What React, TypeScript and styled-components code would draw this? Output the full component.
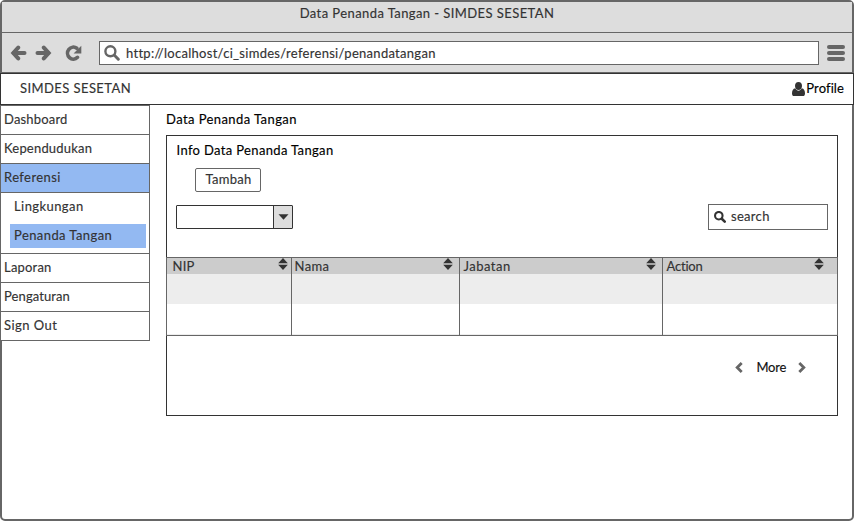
import React from 'react';
import styled, { createGlobalStyle } from 'styled-components';

const ink = '#333333';
const steel = '#666666';
const chrome = '#dddddd';
const accent = '#93b9f2';

const GlobalStyle = createGlobalStyle`
  *, *::before, *::after { box-sizing: border-box; }
  body { margin: 0; background: #fff; }
  button, input { font: inherit; }
  svg { display: block; flex: none; }
`;

const Label = styled.span<{ $track?: number; $dark?: boolean }>`
  letter-spacing: ${(p) => p.$track ?? 0.35}px;
  color: ${(p) => (p.$dark ? '#000' : 'inherit')};
  white-space: nowrap;
  font-variant-ligatures: none;
`;

const BrowserFrame = styled.div`
  width: 854px;
  height: 521px;
  display: flex;
  flex-direction: column;
  border: 2px solid ${steel};
  border-radius: 5px;
  background: #fff;
  color: ${ink};
  font: 13px/16px Lato, sans-serif;
  -webkit-text-stroke: 0.15px;
`;

const TitleBar = styled.div`
  height: 31px;
  padding-top: 3px;
  text-align: center;
  background: ${chrome};
  border-bottom: 1px solid ${steel};
`;

const Toolbar = styled.div`
  height: 40px;
  display: flex;
  align-items: flex-start;
  padding: 8px 7px 0 8px;
  background: ${chrome};
  border-bottom: 1px solid ${steel};
  color: ${steel};
`;

const NavIcons = styled.div`
  display: flex;
  gap: 8px;
  width: 89px;
  padding-top: 4px;
`;

const ReloadSlot = styled.div`
  margin-left: 5px;
`;

const AddressBar = styled.div`
  width: 720px;
  height: 24px;
  display: flex;
  padding: 3px 0 0 4px;
  gap: 6px;
  background: #fff;
  border: 1px solid ${steel};
  color: ${steel};

  ${Label} { color: ${ink}; }
`;

const MenuLines = styled.div`
  display: flex;
  flex-direction: column;
  gap: 2px;
  width: 18px;
  margin: 4px 0 0 8px;
`;

const MenuLine = styled.span`
  height: 4px;
  border-radius: 2px;
  background: ${steel};
`;

const AppHeader = styled.header`
  height: 32px;
  margin: 0 -2px;
  display: flex;
  justify-content: space-between;
  padding: 6px 9px 0 19px;
  background: #fff;
  border: 1px solid ${ink};
`;

const Profile = styled.div`
  display: flex;
  gap: 1px;

  svg { margin-top: 2px; }
`;

const Body = styled.div`
  flex: 1;
  display: flex;
  align-items: flex-start;
  margin-left: -2px;
`;

const Sidebar = styled.nav`
  width: 150px;
  background: #fff;
  border: 1px solid ${steel};
  border-bottom: 0;
`;

const NavItem = styled.div<{ $active?: boolean }>`
  height: 29px;
  padding: 5px 0 0 3px;
  background: ${(p) => (p.$active ? accent : '#fff')};
  border-bottom: 1px solid ${steel};
`;

const SubMenu = styled.div`
  height: 61px;
  padding: 2px 3px 0 9px;
  display: flex;
  flex-direction: column;
  gap: 5px;
  border-bottom: 1px solid ${steel};
`;

const SubItem = styled.div<{ $active?: boolean }>`
  height: 24px;
  padding: 3px 0 0 4px;
  background: ${(p) => (p.$active ? accent : 'transparent')};
`;

const Main = styled.main`
  width: 672px;
  margin-left: 16px;
  padding-top: 6px;
`;

const PageTitle = styled.div`
  height: 24px;
`;

const Panel = styled.section`
  height: 281px;
  border: 1px solid ${ink};
`;

const PanelTitle = styled.div`
  padding: 6px 0 0 9.5px;
  height: 32px;
`;

const AddButton = styled.button`
  display: block;
  width: 66px;
  height: 24px;
  margin-left: 28px;
  padding: 0 0 2px 1px;
  line-height: 16px;
  background: #fff;
  color: ${ink};
  border: 1px solid ${steel};
  border-radius: 2px;
  -webkit-text-stroke: 0.15px;
`;

const Controls = styled.div`
  display: flex;
  justify-content: space-between;
  height: 65px;
  padding: 12px 9px 0;
`;

const Combo = styled.div`
  display: flex;
  justify-content: flex-end;
  width: 117px;
  height: 24px;
  margin-top: 1px;
  border: 1px solid ${ink};
  border-radius: 1px;
`;

const ComboArrow = styled.div`
  width: 19px;
  display: flex;
  align-items: center;
  justify-content: center;
  background: ${chrome};
  border-left: 1px solid ${ink};
`;

const SearchBox = styled.div`
  display: flex;
  gap: 5px;
  width: 120px;
  height: 26px;
  padding: 3px 0 0 5px;
  border: 1px solid ${steel};

  svg { margin-top: 3px; }
`;

const Table = styled.div`
  display: grid;
  grid-template-columns: 125px 168px 203px 174px;
  margin: 0 -1px;
  border: 1px solid ${steel};
  height: 79px;
`;

const Column = styled.div`
  border-right: 1px solid ${steel};
  &:last-child { border-right: 0; }
`;

const HeadCell = styled.div<{ $left?: number; $right?: number }>`
  height: 16px;
  display: flex;
  justify-content: space-between;
  padding-left: ${(p) => p.$left ?? 3}px;
  padding-right: ${(p) => p.$right ?? 6}px;
  background: #cccccc;
`;

const Stripe = styled.div<{ $shaded?: boolean; $thin?: boolean }>`
  height: ${(p) => (p.$thin ? 1 : 30)}px;
  background: ${(p) => (p.$shaded ? '#ededed' : '#fff')};
`;

const Pager = styled.div`
  display: flex;
  justify-content: flex-end;
  align-items: flex-start;
  padding: 23px 31px 0 0;
  color: ${steel};

  ${Label} { color: #111; margin: 0 12px 0 13px; }
  svg { margin-top: 3px; }
`;

const ArrowIcon = ({ flip }: { flip?: boolean }) => (
  <svg width="17" height="16" viewBox="0 0 17 16" fill="none" stroke="currentColor" strokeWidth="4">
    <g transform={flip ? 'translate(17 0) scale(-1 1)' : undefined}>
      <path d="M8.200 2.600 3.300 8l4.900 5.400" strokeLinecap="round" strokeLinejoin="miter" />
      <path d="M4 8h10.500" strokeLinecap="round" />
    </g>
  </svg>
);

const ReloadIcon = () => (
  <svg width="17" height="16" viewBox="0 0 17 16">
    <path d="M11.800 3.300A5.800 6 0 1 0 12.500 12.300" fill="none" stroke="currentColor" strokeWidth="3.600" strokeLinecap="round" />
    <path d="M16.300.8v7.700H8.600z" fill="currentColor" />
  </svg>
);

const LensIcon = ({ size, weight }: { size: number; weight: number }) => (
  <svg width={size} height={size} viewBox="0 0 16 16" fill="none" stroke="currentColor" strokeWidth={weight} strokeLinecap="round">
    <circle cx="6.400" cy="6.300" r="5" />
    <path d="m10.400 10.300 3.900 3.900" strokeWidth={weight + 0.6} />
  </svg>
);

const UserIcon = () => (
  <svg width="13" height="14" viewBox="0 0 13 14" fill={ink}>
    <path d="M6.500 0C8.700 0 10 1.700 10 3.900S8.500 8 6.500 8 3 6.100 3 3.900 4.300 0 6.500 0Z" />
    <path d="M3.300 6.300C4 8 5.200 8.700 6.500 8.700S9 8 9.700 6.300C12 6.800 13 8.600 13 11.400 13 13 12.200 14 11 14H2C.8 14 0 13 0 11.400 0 8.600 1 6.800 3.300 6.300Z" />
  </svg>
);

const SortIcon = () => (
  <svg width="10" height="12" viewBox="0 0 10 12" fill={ink}>
    <path d="M5 0 9.800 5.300H.2ZM5 12 .2 6.700h9.600Z" />
  </svg>
);

const CaretIcon = () => (
  <svg width="11" height="6" viewBox="0 0 11 6" fill={ink}>
    <path d="M.5.300h10L5.500 5.800Z" />
  </svg>
);

const Chevron = ({ right }: { right?: boolean }) => (
  <svg width="8" height="11" viewBox="0 0 8 11" fill="none" stroke="currentColor" strokeWidth="2.800">
    <path d={right ? 'm1.300 1 4.500 4.500-4.500 4.500' : 'M6.700 1 2.200 5.500l4.500 4.500'} />
  </svg>
);

const columns = [
  { name: 'NIP', track: 0.2, left: 5.5, right: 3 },
  { name: 'Nama', track: 0.4, left: 2.5, right: 6 },
  { name: 'Jabatan', track: 0.5, left: 3.5, right: 6 },
  { name: 'Action', track: -0.2, left: 3.5, right: 13 },
];

export default function App() {
  return (
    <>
      <GlobalStyle />
      <BrowserFrame>
        <TitleBar>
          <Label $track={0.42}>Data Penanda Tangan - SIMDES SESETAN</Label>
        </TitleBar>
        <Toolbar>
          <NavIcons>
            <ArrowIcon />
            <ArrowIcon flip />
            <ReloadSlot>
              <ReloadIcon />
            </ReloadSlot>
          </NavIcons>
          <AddressBar>
            <LensIcon size={16} weight={2.4} />
            <Label $track={0.29}>http://localhost/ci_simdes/referensi/penandatangan</Label>
          </AddressBar>
          <MenuLines>
            <MenuLine />
            <MenuLine />
            <MenuLine />
          </MenuLines>
        </Toolbar>
        <AppHeader>
          <Label $track={0.42}>SIMDES SESETAN</Label>
          <Profile>
            <UserIcon />
            <Label $track={0.1} $dark>Profile</Label>
          </Profile>
        </AppHeader>
        <Body>
          <Sidebar>
            <NavItem><Label $track={0.18}>Dashboard</Label></NavItem>
            <NavItem><Label $track={0.2}>Kependudukan</Label></NavItem>
            <NavItem $active><Label $track={0.42}>Referensi</Label></NavItem>
            <SubMenu>
              <SubItem><Label $track={0.42}>Lingkungan</Label></SubItem>
              <SubItem $active><Label $track={0.42}>Penanda Tangan</Label></SubItem>
            </SubMenu>
            <NavItem><Label $track={0.2}>Laporan</Label></NavItem>
            <NavItem><Label $track={0.1}>Pengaturan</Label></NavItem>
            <NavItem><Label $track={0.45}>Sign Out</Label></NavItem>
          </Sidebar>
          <Main>
            <PageTitle><Label $track={0.42} $dark>Data Penanda Tangan</Label></PageTitle>
            <Panel>
              <PanelTitle><Label $track={0.35} $dark>Info Data Penanda Tangan</Label></PanelTitle>
              <AddButton><Label $track={0.28}>Tambah</Label></AddButton>
              <Controls>
                <Combo>
                  <ComboArrow><CaretIcon /></ComboArrow>
                </Combo>
                <SearchBox>
                  <LensIcon size={12} weight={2.8} />
                  <Label $track={0.3}>search</Label>
                </SearchBox>
              </Controls>
              <Table>
                {columns.map((c) => (
                  <Column key={c.name}>
                    <HeadCell $left={c.left} $right={c.right}>
                      <Label $track={c.track}>{c.name}</Label>
                      <SortIcon />
                    </HeadCell>
                    <Stripe $shaded />
                    <Stripe />
                    <Stripe $shaded $thin />
                  </Column>
                ))}
              </Table>
              <Pager>
                <Chevron />
                <Label $track={-0.25}>More</Label>
                <Chevron right />
              </Pager>
            </Panel>
          </Main>
        </Body>
      </BrowserFrame>
    </>
  );
}
